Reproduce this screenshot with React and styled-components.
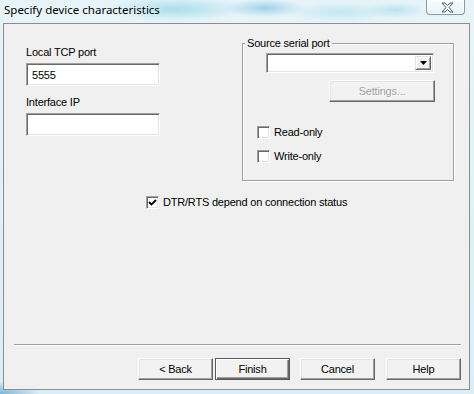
import React from "react";
import styled, { createGlobalStyle } from "styled-components";

const GlobalStyle = createGlobalStyle`
  html, body {
    margin: 0;
    padding: 0;
  }

  body {
    width: 474px;
    height: 394px;
    overflow: hidden;
    font-family: "Liberation Sans", Arial, sans-serif;
    font-size: 11px;
    letter-spacing: -0.2px;
    color: #000;
  }
`;

const Window = styled.div`
  width: 474px;
  height: 394px;
  box-sizing: border-box;
  display: flex;
  flex-direction: column;
  padding: 0 4px 4px 3px;
  background:
    radial-gradient(ellipse 70px 12px at 175px 9px, rgba(120, 205, 225, 0.55), transparent),
    radial-gradient(ellipse 40px 9px at 265px 8px, rgba(95, 175, 220, 0.5), transparent),
    radial-gradient(ellipse 50px 10px at 340px 12px, rgba(150, 215, 232, 0.45), transparent),
    radial-gradient(ellipse 30px 8px at 395px 10px, rgba(120, 200, 225, 0.4), transparent),
    radial-gradient(ellipse 40px 12px at 0px 394px, rgba(60, 140, 200, 0.6), transparent),
    linear-gradient(#e6f4f9, #d9eef5);
`;

const TitleBar = styled.div`
  height: 23px;
  flex-shrink: 0;
  display: flex;
  justify-content: space-between;
  align-items: flex-start;
`;

const Title = styled.span`
  padding: 2px 0 0 1px;
  font-family: "Noto Sans", "Liberation Sans", sans-serif;
  font-size: 11.5px;
  letter-spacing: 0;
  color: #000;
  text-shadow: 0 0 6px rgba(255, 255, 255, 0.9);
`;

const CloseButton = styled.div`
  width: 39px;
  height: 15px;
  margin-right: 5px;
  box-sizing: border-box;
  border: 1px solid #8a9aa8;
  border-top: none;
  border-radius: 0 0 4px 4px;
  background: linear-gradient(rgba(255, 255, 255, 0.75), rgba(230, 242, 248, 0.6));
  box-shadow: inset 0 0 0 1px rgba(255, 255, 255, 0.7);
  display: flex;
  align-items: center;
  justify-content: center;
  padding-left: 4px;
`;

const Client = styled.div`
  flex: 1;
  display: flex;
  flex-direction: column;
  border: 1px solid #8c8d8e;
  background: #f0f0f0;
  padding-top: 13px;
`;

const TopRow = styled.div`
  display: flex;
  align-items: flex-start;
  padding-left: 22px;
`;

const LeftColumn = styled.div`
  width: 134px;
  padding-top: 9px;
  display: flex;
  flex-direction: column;
`;

const Label = styled.span`
  line-height: 13px;
  margin-bottom: ${(p) => p.$gap || 4}px;
`;

const TextBox = styled.div`
  height: 23px;
  box-sizing: border-box;
  background: #fff;
  border-top: 1px solid #a0a0a0;
  border-left: 1px solid #a0a0a0;
  border-right: 1px solid #fff;
  border-bottom: 1px solid #fff;
  box-shadow: inset 1px 1px 0 #696969, inset -1px -1px 0 #e3e3e3;
  padding: 0 5px;
  display: flex;
  align-items: center;
  margin-bottom: ${(p) => p.$gap || 0}px;
`;

const GroupBox = styled.div`
  position: relative;
  width: 212px;
  height: 138px;
  margin: 6px 0 0 82px;
  box-sizing: border-box;
  border: 1px solid #a0a0a0;
  box-shadow: inset 1px 1px 0 #fff, 1px 1px 0 #fff;
  display: flex;
  flex-direction: column;
  align-items: flex-start;
  padding-top: 9px;
`;

const Caption = styled.span`
  position: absolute;
  top: -7px;
  left: 2px;
  padding: 0 2px;
  line-height: 13px;
  background: #f0f0f0;
`;

const ComboBox = styled.div`
  width: 168px;
  height: 20px;
  margin-left: 23px;
  box-sizing: border-box;
  background: #fff;
  border-top: 1px solid #a0a0a0;
  border-left: 1px solid #a0a0a0;
  border-right: 1px solid #fff;
  border-bottom: 1px solid #fff;
  box-shadow: inset 1px 1px 0 #696969, inset -1px -1px 0 #e3e3e3;
  display: flex;
  justify-content: flex-end;
  padding: 2px;
`;

const DropButton = styled.div`
  width: 16px;
  box-sizing: border-box;
  background: #f0f0f0;
  border: 1px solid;
  border-color: #e3e3e3 #696969 #696969 #e3e3e3;
  box-shadow: inset 1px 1px 0 #fff, inset -1px -1px 0 #a0a0a0;
  display: flex;
  align-items: center;
  justify-content: center;
`;

const Button = styled.button`
  width: ${(p) => p.$width || 75}px;
  height: 22px;
  margin-left: ${(p) => p.$gap || 0}px;
  box-sizing: border-box;
  padding: 0;
  font-family: inherit;
  font-size: 11px;
  letter-spacing: inherit;
  color: ${(p) => (p.disabled ? "#a0a0a0" : "#000")};
  background: #f2f2f2;
  border: 1px solid;
  border-color: ${(p) =>
    p.$default ? "#5a5a5a" : "#ffffff #696969 #696969 #ffffff"};
  box-shadow: ${(p) =>
    p.$default
      ? "inset 1px 1px 0 #fff, inset -1px -1px 0 #696969, inset -2px -2px 0 #a0a0a0"
      : "inset -1px -1px 0 #a0a0a0, inset 1px 1px 0 #e3e3e3"};
`;

const SettingsButton = styled(Button)`
  margin: 7px 0 0 86px;
  text-shadow: ${(p) => (p.disabled ? "1px 1px 0 #fff" : "none")};
`;

const CheckRow = styled.label`
  display: flex;
  align-items: center;
  gap: 4px;
  line-height: 13px;
  margin-top: ${(p) => p.$top || 0}px;
  margin-left: ${(p) => p.$left || 0}px;
`;

const CheckBox = styled.span`
  width: 13px;
  height: 13px;
  box-sizing: border-box;
  flex-shrink: 0;
  background: #fff;
  border-top: 1px solid #a0a0a0;
  border-left: 1px solid #a0a0a0;
  border-right: 1px solid #fff;
  border-bottom: 1px solid #fff;
  box-shadow: inset 1px 1px 0 #696969, inset -1px -1px 0 #e3e3e3;
  display: flex;
  align-items: center;
  justify-content: center;
`;

const Footer = styled.div`
  margin-top: auto;
  display: flex;
  flex-direction: column;
  padding-bottom: 9px;
`;

const Separator = styled.div`
  height: 1px;
  margin: 0 8px 12px 10px;
  background: #a0a0a0;
  border-bottom: 1px solid #fff;
`;

const ButtonRow = styled.div`
  display: flex;
  justify-content: flex-end;
  padding-right: 8px;
`;

const CheckMark = () => (
  <svg width="9" height="9" viewBox="0 0 9 9">
    <path d="M1 4 L3.5 6.5 L8 2" fill="none" stroke="#000" strokeWidth="1.8" />
  </svg>
);

const Check = ({ checked, children, ...rest }) => (
  <CheckRow {...rest}>
    <CheckBox>{checked && <CheckMark />}</CheckBox>
    {children}
  </CheckRow>
);

const App = () => {
  return (
    <>
      <GlobalStyle />
      <Window>
        <TitleBar>
          <Title>Specify device characteristics</Title>
          <CloseButton>
            <svg width="13" height="11" viewBox="0 0 13 11">
              <path
                d="M1 1 H4 L6.5 3.5 L9 1 H12 L8 5.5 L12 10 H9 L6.5 7.5 L4 10 H1 L5 5.5 Z"
                fill="#fff"
                stroke="#4a5866"
                strokeWidth="1"
              />
            </svg>
          </CloseButton>
        </TitleBar>

        <Client>
          <TopRow>
            <LeftColumn>
              <Label>Local TCP port</Label>
              <TextBox $gap={10}>5555</TextBox>
              <Label>Interface IP</Label>
              <TextBox />
            </LeftColumn>

            <GroupBox>
              <Caption>Source serial port</Caption>
              <ComboBox>
                <DropButton>
                  <svg width="7" height="4" viewBox="0 0 7 4">
                    <path d="M0 0 H7 L3.5 4 Z" fill="#000" />
                  </svg>
                </DropButton>
              </ComboBox>
              <SettingsButton $width={106} disabled>
                Settings...
              </SettingsButton>
              <Check $top={24} $left={14}>
                Read-only
              </Check>
              <Check $top={11} $left={14}>
                Write-only
              </Check>
            </GroupBox>
          </TopRow>

          <Check checked $top={15} $left={142}>
            DTR/RTS depend on connection status
          </Check>

          <Footer>
            <Separator />
            <ButtonRow>
              <Button>&lt; Back</Button>
              <Button $default $gap={2}>
                Finish
              </Button>
              <Button $gap={10}>Cancel</Button>
              <Button $gap={11}>Help</Button>
            </ButtonRow>
          </Footer>
        </Client>
      </Window>
    </>
  );
};

export default App;
